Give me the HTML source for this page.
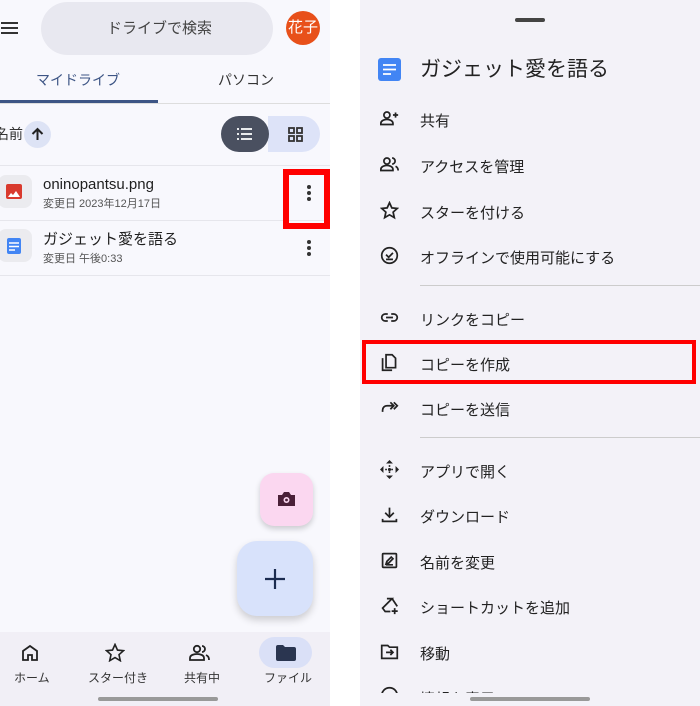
<!DOCTYPE html>
<html><head><meta charset="utf-8">
<style>
*{margin:0;padding:0;box-sizing:border-box}
body{width:700px;height:706px;position:relative;overflow:hidden;background:#fff;font-family:"Liberation Sans","Noto Sans CJK JP",sans-serif;color:#1f1f1f}
.a{position:absolute}
#L{left:0;top:0;width:330px;height:706px;background:#f8f8fd;overflow:hidden}
#R{left:360px;top:0;width:340px;height:706px;background:#f3f2f8;overflow:hidden}
.t{position:absolute;white-space:nowrap;line-height:1}
.mi{position:absolute;left:60px;font-size:15px;color:#222}
.ic{position:absolute;left:20px;width:19px;height:19px}
svg{display:block}
</style></head><body>
<div id="L" class="a">
  <svg class="a" style="left:0;top:20px" width="20" height="16"><path d="M1 3h17M1 8h17M1 13h17" stroke="#333" stroke-width="2"/></svg>
  <div class="a" style="left:41px;top:2px;width:232px;height:53px;border-radius:27px;background:#e8e8f0"></div>
  <div class="t" style="left:107px;top:21px;font-size:15px;color:#444">ドライブで検索</div>
  <div class="a" style="left:286px;top:11px;width:34px;height:34px;border-radius:50%;background:#e8501a;color:#fff;font-size:15px;text-align:center;line-height:34px">花子</div>
  <div class="t" style="left:36px;top:73px;font-size:14px;color:#3d5585">マイドライブ</div>
  <div class="t" style="left:218px;top:73px;font-size:14px;color:#333">パソコン</div>
  <div class="a" style="left:0;top:103px;width:330px;height:1px;background:#ddd"></div>
  <div class="a" style="left:0;top:100px;width:158px;height:3px;background:#3d5585"></div>
  <div class="t" style="left:-5px;top:127px;font-size:14px;color:#333">名前</div>
  <div class="a" style="left:24px;top:121px;width:27px;height:27px;border-radius:50%;background:#dde3f5"></div>
  <svg class="a" style="left:30px;top:127px" width="15" height="15"><path d="M7.5 13V2M2.5 7l5-5 5 5" stroke="#222" stroke-width="2" fill="none"/></svg>
  <div class="a" style="left:268px;top:116px;width:52px;height:36px;border-radius:0 18px 18px 0;background:#dde3f8"></div>
  <div class="a" style="left:221px;top:116px;width:48px;height:36px;border-radius:18px;background:#4a5060"></div>
  <svg class="a" style="left:237px;top:128px" width="16" height="12"><path d="M0 1h2M4 1h11M0 6h2M4 6h11M0 11h2M4 11h11" stroke="#fff" stroke-width="1.8"/></svg>
  <svg class="a" style="left:288px;top:127px" width="15" height="15"><g fill="none" stroke="#333" stroke-width="1.8"><rect x="1" y="1" width="5" height="5"/><rect x="9" y="1" width="5" height="5"/><rect x="1" y="9" width="5" height="5"/><rect x="9" y="9" width="5" height="5"/></g></svg>
  <div class="a" style="left:0;top:165px;width:330px;height:1px;background:#e6e6ec"></div>
  <div class="a" style="left:0;top:220px;width:330px;height:1px;background:#e6e6ec"></div>
  <div class="a" style="left:0;top:275px;width:330px;height:1px;background:#e6e6ec"></div>
  <div class="a" style="left:-2px;top:175px;width:34px;height:33px;border-radius:8px;background:#ebebef"></div>
  <div class="a" style="left:6px;top:184px;width:16px;height:15px;border-radius:2px;background:#d93a2e"></div>
  <svg class="a" style="left:8px;top:191px" width="12" height="6"><path d="M0 6l3-4 2 2 3-4 4 6z" fill="#fff"/></svg>
  <div class="t" style="left:43px;top:177px;font-size:15px">oninopantsu.png</div>
  <div class="t" style="left:43px;top:199px;font-size:11px;color:#555">変更日 2023年12月17日</div>
  <div class="a" style="left:-2px;top:229px;width:34px;height:33px;border-radius:8px;background:#ebebef"></div>
  <div class="a" style="left:7px;top:238px;width:14px;height:16px;border-radius:2px;background:#4285f4"></div>
  <svg class="a" style="left:9px;top:242px" width="10" height="9"><path d="M0 1h10M0 4.5h10M0 8h6" stroke="#fff" stroke-width="1.4"/></svg>
  <div class="t" style="left:43px;top:232px;font-size:15px">ガジェット愛を語る</div>
  <div class="t" style="left:43px;top:254px;font-size:11px;color:#555">変更日 午後0:33</div>
  <svg class="a" style="left:306px;top:184px" width="6" height="18"><g fill="#333"><circle cx="3" cy="3" r="2"/><circle cx="3" cy="9" r="2"/><circle cx="3" cy="15" r="2"/></g></svg>
  <svg class="a" style="left:306px;top:239px" width="6" height="18"><g fill="#333"><circle cx="3" cy="3" r="2"/><circle cx="3" cy="9" r="2"/><circle cx="3" cy="15" r="2"/></g></svg>
  <div class="a" style="left:283px;top:169px;width:47px;height:60px;border:6px solid #f00"></div>
  <div class="a" style="left:260px;top:473px;width:53px;height:53px;border-radius:14px;background:#fbd7f0;box-shadow:0 3px 6px rgba(0,0,0,.18)"></div>
  <svg class="a" style="left:277px;top:491px" width="19" height="16"><path d="M1 4h4l2-3h5l2 3h4v11H1z" fill="#4a2038"/><circle cx="9.5" cy="9" r="3" fill="#fbd7f0"/><circle cx="9.5" cy="9" r="1.4" fill="#4a2038"/></svg>
  <div class="a" style="left:237px;top:541px;width:76px;height:75px;border-radius:20px;background:#d8e2fb;box-shadow:0 4px 8px rgba(0,0,0,.18)"></div>
  <svg class="a" style="left:265px;top:569px" width="20" height="20"><path d="M10 0v20M0 10h20" stroke="#1c2c50" stroke-width="2.2"/></svg>
  <div class="a" style="left:0;top:632px;width:330px;height:74px;background:#f1eff6"></div>
  <div class="a" style="left:259px;top:637px;width:53px;height:31px;border-radius:16px;background:#dae0f7"></div>
  <svg class="a" style="left:21px;top:644px" width="18" height="18"><path d="M2 16V7l7-5 7 5v9h-5v-5H7v5z" fill="none" stroke="#222" stroke-width="1.8"/></svg>
  <svg class="a" style="left:105px;top:643px" width="20" height="19"><path d="M10 1.5l2.5 5.6 6 .6-4.5 4 1.3 6-5.3-3.1-5.3 3.1 1.3-6-4.5-4 6-.6z" fill="none" stroke="#222" stroke-width="1.6"/></svg>
  <svg class="a" style="left:189px;top:644px" width="22" height="18"><g fill="none" stroke="#222" stroke-width="1.8"><circle cx="8" cy="5" r="3.2"/><path d="M1 16v-2c0-3 4-4 7-4s7 1 7 4v2z"/><path d="M13 2a3 3 0 010 6M17 11c2 1 3 2 3 5"/></g></svg>
  <svg class="a" style="left:276px;top:645px" width="20" height="16"><path d="M0 2q0-2 2-2h5l2 2h9q2 0 2 2v10q0 2-2 2H2q-2 0-2-2z" fill="#2a3550"/></svg>
  <div class="t" style="left:14px;top:672px;font-size:12px;color:#333">ホーム</div>
  <div class="t" style="left:88px;top:672px;font-size:12px;color:#333">スター付き</div>
  <div class="t" style="left:184px;top:672px;font-size:12px;color:#333">共有中</div>
  <div class="t" style="left:264px;top:672px;font-size:12px;color:#333">ファイル</div>
  <div class="a" style="left:98px;top:697px;width:120px;height:4px;border-radius:2px;background:#999"></div>
</div>

<div id="R" class="a">
  <div class="a" style="left:155px;top:18px;width:30px;height:4px;border-radius:2px;background:#444"></div>
  <div class="a" style="left:18px;top:58px;width:23px;height:23px;border-radius:3px;background:#4285f4"></div>
  <svg class="a" style="left:23px;top:64px" width="13" height="11"><path d="M0 1h13M0 5.5h13M0 10h8" stroke="#fff" stroke-width="1.8"/></svg>
  <div class="t" style="left:60px;top:59px;font-size:21px;color:#222">ガジェット愛を語る</div>

  <svg class="ic" style="top:109px" viewBox="0 0 22 22"><g fill="none" stroke="#222" stroke-width="2"><circle cx="8" cy="7" r="3.5"/><path d="M1 18v-1.5c0-3 4-4.5 7-4.5s7 1.5 7 4.5V18z"/><path d="M18 4v6M15 7h6"/></g></svg>
  <div class="mi" style="top:110px">共有</div>
  <svg class="ic" style="top:155px" viewBox="0 0 22 22"><g fill="none" stroke="#222" stroke-width="2"><circle cx="8" cy="7" r="3.5"/><path d="M1 18v-1.5c0-3 4-4.5 7-4.5s7 1.5 7 4.5V18z"/><path d="M14 3.5a3.5 3.5 0 010 7M18 13c2 1 3 2.5 3 5"/></g></svg>
  <div class="mi" style="top:156px">アクセスを管理</div>
  <svg class="ic" style="top:201px" viewBox="0 0 22 22"><path d="M11 2l2.7 6 6.3.6-4.8 4.3 1.4 6.4L11 16l-5.6 3.3 1.4-6.4L2 8.6 8.3 8z" fill="none" stroke="#222" stroke-width="2"/></svg>
  <div class="mi" style="top:202px">スターを付ける</div>
  <svg class="ic" style="top:246px" viewBox="0 0 22 22"><g fill="none" stroke="#222" stroke-width="2"><circle cx="11" cy="11" r="9"/><path d="M7 10l3 3 5-5M7 15.5h8"/></g></svg>
  <div class="mi" style="top:247px">オフラインで使用可能にする</div>
  <div class="a" style="left:60px;top:285px;width:280px;height:1px;background:#ccc"></div>
  <svg class="ic" style="top:308px" viewBox="0 0 22 22"><g fill="none" stroke="#222" stroke-width="2"><path d="M9 7H6a4 4 0 000 8h3M13 7h3a4 4 0 010 8h-3M7 11h8"/></g></svg>
  <div class="mi" style="top:309px">リンクをコピー</div>
  <svg class="ic" style="top:353px" viewBox="0 0 22 22"><g fill="none" stroke="#222" stroke-width="2"><path d="M3 6v14h11"/><path d="M7 2h7l4 4v11H7z"/></g></svg>
  <div class="mi" style="top:354px">コピーを作成</div>
  <div class="a" style="left:2px;top:340px;width:334px;height:44px;border:4px solid #f00"></div>
  <svg class="ic" style="top:398px" viewBox="0 0 22 22"><g fill="none" stroke="#222" stroke-width="2"><path d="M3 16v-2a5 5 0 015-5h8M12 5l4 4-4 4M16 5l4 4-4 4"/></g></svg>
  <div class="mi" style="top:399px">コピーを送信</div>
  <div class="a" style="left:60px;top:437px;width:280px;height:1px;background:#ccc"></div>
  <svg class="ic" style="top:460px" viewBox="0 0 22 22"><g fill="#222"><path d="M11 0l4 4H7zM11 22l4-4H7zM0 11l4-4v8zM22 11l-4-4v8z"/><circle cx="11" cy="11" r="1.8"/></g><path d="M6 11h10M11 6v10" stroke="#222" stroke-width="1.8" stroke-dasharray="2 1.5"/></svg>
  <div class="mi" style="top:461px">アプリで開く</div>
  <svg class="ic" style="top:505px" viewBox="0 0 22 22"><g fill="none" stroke="#222" stroke-width="2"><path d="M11 3v11M6 9l5 5 5-5M3 16v3h16v-3"/></g></svg>
  <div class="mi" style="top:506px">ダウンロード</div>
  <svg class="ic" style="top:551px" viewBox="0 0 22 22"><g fill="none" stroke="#222" stroke-width="2"><rect x="3" y="3" width="16" height="16" rx="1"/><path d="M7 15l1-3 5-5 2 2-5 5zM7 16h8"/></g></svg>
  <div class="mi" style="top:552px">名前を変更</div>
  <svg class="ic" style="top:596px" viewBox="0 0 22 22"><g fill="none" stroke="#222" stroke-width="2"><path d="M8 3h6l-11 11 3 4h6M14 3l6 9"/><path d="M17 14v7M13.5 17.5h7"/></g></svg>
  <div class="mi" style="top:597px">ショートカットを追加</div>
  <svg class="ic" style="top:642px" viewBox="0 0 22 22"><g fill="none" stroke="#222" stroke-width="2"><path d="M2 4h7l2 2h9v13H2z"/><path d="M7 12h8M12 9l3 3-3 3"/></g></svg>
  <div class="mi" style="top:643px">移動</div>
  <svg class="ic" style="top:686px" viewBox="0 0 22 22"><circle cx="11" cy="11" r="9" fill="none" stroke="#222" stroke-width="2"/></svg>
  <div class="mi" style="top:688px">情報を表示</div>
  <div class="a" style="left:0;top:693px;width:340px;height:13px;background:#f3f2f8"></div>
  <div class="a" style="left:110px;top:697px;width:120px;height:4px;border-radius:2px;background:#999"></div>
</div>
</body></html>
